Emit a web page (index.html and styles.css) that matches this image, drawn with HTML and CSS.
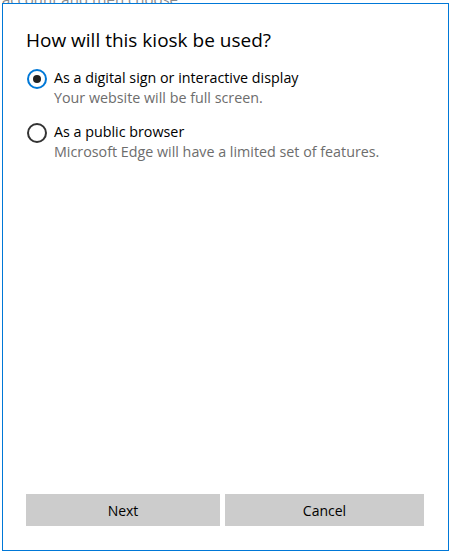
FILE: index.html
```html
<!DOCTYPE html>
<html>
<head>
<meta charset="utf-8">
<link rel="stylesheet" href="styles.css">
</head>
<body>
<div class="behind"><span>account and then choose</span></div>
<div class="dialog">
  <h1 class="title">How will this kiosk be used?</h1>
  <div class="options">
    <label class="option">
      <span class="radio checked"><span class="dot"></span></span>
      <span class="texts">
        <span class="label">As a digital sign or interactive display</span>
        <span class="desc">Your website will be full screen.</span>
      </span>
    </label>
    <label class="option">
      <span class="radio"></span>
      <span class="texts">
        <span class="label">As a public browser</span>
        <span class="desc">Microsoft Edge will have a limited set of features.</span>
      </span>
    </label>
  </div>
  <div class="spacer"></div>
  <div class="buttons">
    <button class="btn">Next</button>
    <button class="btn">Cancel</button>
  </div>
</div>
</body>
</html>
```
FILE: styles.css
```css
html, body {
  margin: 0;
  padding: 0;
  background: #ffffff;
  width: 449px;
  height: 553px;
  overflow: hidden;
  font-family: "Open Sans", "Noto Sans", sans-serif;
}
.behind {
  height: 3px;
  overflow: hidden;
  position: relative;
}
.behind span {
  position: absolute;
  left: 2px;
  top: -11px;
  font-size: 15px;
  color: #8a8a8a;
  white-space: nowrap;
}
.dialog {
  margin-left: 2px;
  border: 1px solid #0078d7;
  background: #fff;
  display: flex;
  flex-direction: column;
  padding: 0 23px;
  box-sizing: border-box;
  width: 447px;
  height: 548px;
}
.title {
  margin: 23px 0 0 0;
  font-weight: 400;
  font-size: 19px;
  line-height: 26px;
  color: #000;
}
.options {
  margin-top: 15px;
  display: flex;
  flex-direction: column;
  gap: 14px;
}
.option {
  display: flex;
  align-items: flex-start;
}
.radio {
  width: 16px;
  height: 16px;
  border: 2px solid #333;
  border-radius: 50%;
  margin: 1px 7px 0 1px;
  display: flex;
  align-items: center;
  justify-content: center;
  flex: none;
}
.radio.checked {
  border-color: #0078d7;
}
.dot {
  width: 8px;
  height: 8px;
  border-radius: 50%;
  background: #222;
}
.texts {
  display: flex;
  flex-direction: column;
}
.label {
  font-size: 14.3px;
  line-height: 20px;
  color: #000;
}
.desc {
  font-size: 14.3px;
  line-height: 20px;
  color: #6d6d6d;
}
.spacer {
  flex: 1;
}
.buttons {
  display: flex;
  gap: 5px;
  margin-bottom: 24px;
}
.btn {
  width: 194px;
  height: 32px;
  border: none;
  background: #cccccc;
  font-family: inherit;
  font-size: 14px;
  color: #000;
  padding: 0;
}
.btn + .btn {
  width: 199px;
}
```
